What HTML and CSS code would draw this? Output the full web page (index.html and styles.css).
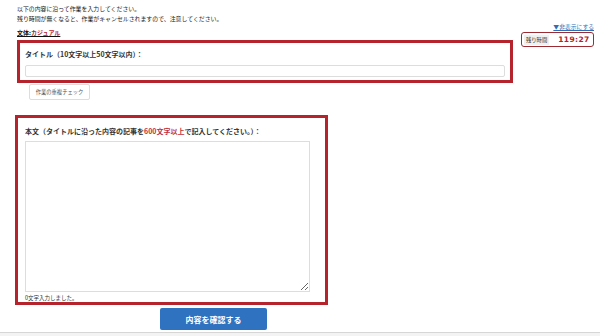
FILE: index.html
```html
<!DOCTYPE html>
<html lang="ja">
<head>
    <meta charset="UTF-8">
    <title>作業入力</title>
    <link rel="stylesheet" href="styles.css">
</head>
<body>
    <div class="wrap">
        <main class="main">
            <p class="intro">以下の内容に沿って作業を入力してください。</p>
            <p class="intro">残り時間が無くなると、作業がキャンセルされますので、注意してください。</p>
            <p class="style-line">文体:<span class="style-val">カジュアル</span></p>

            <!-- Title -->
            <section class="box box-title">
                <label class="box-label">タイトル（10文字以上50文字以内）：</label>
                <input type="text" class="title-input">
            </section>
            <button class="check-btn">作業の重複チェック</button>

            <!-- Body -->
            <section class="box box-body">
                <label class="box-label">本文（タイトルに沿った内容の記事を<span class="red">600文字以上</span>で記入してください。）：</label>
                <textarea class="body-input"></textarea>
                <p class="count">0文字入力しました。</p>
            </section>

            <button class="submit-btn">内容を確認する</button>
        </main>
        <aside class="side">
            <a href="#" class="hide-link">▼非表示にする</a>
            <div class="timer">
                <span class="timer-label">残り時間</span>
                <span class="timer-value">119:27</span>
            </div>
        </aside>
    </div>
    <footer class="foot"></footer>
</body>
</html>
```
FILE: styles.css
```css
body {
    margin: 0;
    font-family: "Noto Sans CJK JP", "Noto Sans", sans-serif;
    color: #222;
    background: #fff;
}
p {
    margin: 0;
}
.wrap {
    display: flex;
    padding: 0 6px 0 17px;
}
.main {
    flex: 1;
}
.intro {
    font-size: 5.9px;
    line-height: 10px;
    color: #222;
}
.intro:first-child {
    margin-top: 4px;
}
.style-line {
    margin-top: 5px;
    font-size: 6px;
    font-weight: bold;
    line-height: 8px;
    text-decoration: underline;
    color: #111;
}
.style-val {
    color: #b3232b;
}
.box {
    border: 3px solid #b5232c;
    box-sizing: border-box;
    display: flex;
    flex-direction: column;
}
.box-title {
    margin-top: 3px;
    width: 496px;
    height: 43px;
    padding: 6px 5px 0 5px;
}
.box-label {
    font-size: 7px;
    font-weight: bold;
    line-height: 10px;
    color: #333;
}
.red {
    color: #c0303a;
}
.title-input {
    margin-top: 6px;
    height: 12px;
    box-sizing: border-box;
    border: 1px solid #ddd;
    border-radius: 2px;
    padding: 0;
}
.check-btn {
    display: block;
    margin: 1px 0 0 12px;
    width: 61px;
    height: 16px;
    padding: 0;
    font-family: inherit;
    font-size: 5.3px;
    color: #555;
    background: #fff;
    border: 1px solid #ddd;
    border-radius: 2px;
}
.box-body {
    margin: 15px 0 0 -2px;
    width: 313px;
    height: 190px;
    padding: 8px 15px 0 7px;
}
.body-input {
    margin-top: 5px;
    height: 151px;
    box-sizing: border-box;
    border: 1px solid #ddd;
    resize: vertical;
    padding: 0;
}
.count {
    font-size: 5.5px;
    line-height: 8px;
    margin-top: 2px;
    color: #333;
}
.submit-btn {
    display: block;
    margin: 3px 0 0 143px;
    width: 107px;
    height: 22px;
    padding: 0;
    border: none;
    border-radius: 2px;
    background: #2f72bf;
    color: #fff;
    font-family: inherit;
    font-size: 8px;
    font-weight: bold;
}
.side {
    width: 73px;
    padding-top: 23px;
    display: flex;
    flex-direction: column;
    align-items: flex-end;
}
.hide-link {
    font-size: 5.8px;
    line-height: 8px;
    color: #2f6db5;
}
.timer {
    margin-top: 1px;
    width: 73px;
    height: 15px;
    box-sizing: border-box;
    border: 1.5px solid #9e2b32;
    border-radius: 3px;
    display: flex;
    align-items: center;
    padding: 0 3px 0 2px;
    gap: 9px;
}
.timer-label {
    font-size: 5.3px;
    background: #f0f0f0;
    padding: 1px 2px;
    color: #333;
}
.timer-value {
    font-family: "DejaVu Sans", sans-serif;
    font-size: 7.5px;
    font-weight: bold;
    color: #b3232b;
    letter-spacing: 0.4px;
}
.foot {
    margin-top: 2px;
    border-top: 1px solid #d6d6d6;
    background: #f3f3f3;
    height: 10px;
}
```
